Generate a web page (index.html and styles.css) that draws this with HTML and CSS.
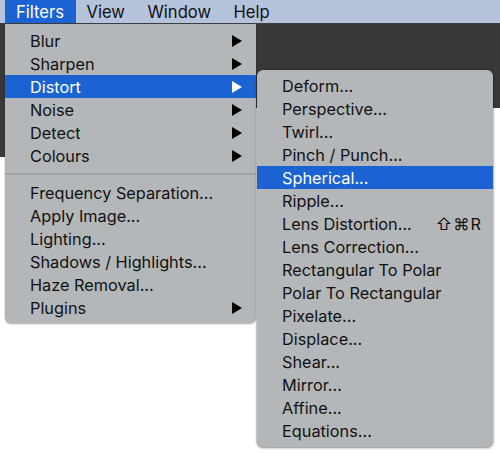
FILE: index.html
```html
<!DOCTYPE html>
<html>
<head>
<meta charset="utf-8">
<link rel="stylesheet" href="styles.css">
</head>
<body>
<div class="screen">
  <div class="menubar">
    <span class="mb-item active">Filters</span>
    <span class="mb-item">View</span>
    <span class="mb-item">Window</span>
    <span class="mb-item">Help</span>
  </div>
  <div class="backdrop"></div>

  <div class="menu main-menu">
    <div class="item"><span class="label">Blur</span><span class="arrow"></span></div>
    <div class="item"><span class="label">Sharpen</span><span class="arrow"></span></div>
    <div class="item selected"><span class="label">Distort</span><span class="arrow"></span></div>
    <div class="item"><span class="label">Noise</span><span class="arrow"></span></div>
    <div class="item"><span class="label">Detect</span><span class="arrow"></span></div>
    <div class="item"><span class="label">Colours</span><span class="arrow"></span></div>
    <div class="sep"></div>
    <div class="item"><span class="label">Frequency Separation...</span></div>
    <div class="item"><span class="label">Apply Image...</span></div>
    <div class="item"><span class="label">Lighting...</span></div>
    <div class="item"><span class="label">Shadows / Highlights...</span></div>
    <div class="item"><span class="label">Haze Removal...</span></div>
    <div class="item"><span class="label">Plugins</span><span class="arrow"></span></div>
  </div>

  <div class="menu sub-menu">
    <div class="item"><span class="label">Deform...</span></div>
    <div class="item"><span class="label">Perspective...</span></div>
    <div class="item"><span class="label">Twirl...</span></div>
    <div class="item"><span class="label">Pinch / Punch...</span></div>
    <div class="item selected"><span class="label">Spherical...</span></div>
    <div class="item"><span class="label">Ripple...</span></div>
    <div class="item"><span class="label">Lens Distortion...</span><span class="shortcut">⇧⌘R</span></div>
    <div class="item"><span class="label">Lens Correction...</span></div>
    <div class="item"><span class="label">Rectangular To Polar</span></div>
    <div class="item"><span class="label">Polar To Rectangular</span></div>
    <div class="item"><span class="label">Pixelate...</span></div>
    <div class="item"><span class="label">Displace...</span></div>
    <div class="item"><span class="label">Shear...</span></div>
    <div class="item"><span class="label">Mirror...</span></div>
    <div class="item"><span class="label">Affine...</span></div>
    <div class="item"><span class="label">Equations...</span></div>
  </div>
</div>
</body>
</html>
```

FILE: styles.css
```css
html, body {
  margin: 0;
  padding: 0;
  background: #ffffff;
}
.screen {
  position: relative;
  width: 500px;
  height: 453px;
  overflow: hidden;
  font-family: "Inter", "Liberation Sans", sans-serif;
  font-size: 16.3px;
  color: #111;
}
.menubar {
  height: 23px;
  background: #b6c3dc;
  border-bottom: 1px solid #3a3e44;
  display: flex;
  align-items: stretch;
  padding-left: 5px;
}
.mb-item {
  display: flex;
  align-items: center;
  padding: 0 11.5px 0 11px;
  font-size: 16.6px;
  color: #111;
}
.mb-item.active {
  background: #1b63d3;
  color: #fff;
}
.backdrop {
  height: 134px;
  background:
    linear-gradient(#383838, #383838) 0 0 / 100% 84px no-repeat,
    linear-gradient(#383838, #383838) 0 0 / 5px 133px no-repeat,
    #ffffff;
}
.menu {
  position: absolute;
  background: #b4b7b9;
  box-sizing: border-box;
}
.main-menu {
  left: 5px;
  top: 24px;
  width: 251px;
  padding: 5px 0 4px;
  border-radius: 0 0 6px 6px;
  box-shadow: 0 1px 2px rgba(0,0,0,0.35);
}
.sub-menu {
  left: 257px;
  top: 70px;
  width: 236px;
  padding: 4px 0 5px;
  border-radius: 6px;
  box-shadow: 0 1px 3px rgba(0,0,0,0.4), 0 0 0 0.5px rgba(0,0,0,0.2);
}
.item {
  height: 23px;
  display: flex;
  align-items: center;
  padding-left: 25px;
  padding-right: 14px;
}
.sub-menu .item {
  padding-left: 25px;
  padding-right: 11px;
}
.item .label {
  flex: 1;
  white-space: nowrap;
}
.item.selected {
  background: #1b63d3;
  color: #fff;
}
.arrow {
  width: 0;
  height: 0;
  border-top: 6px solid transparent;
  border-bottom: 6px solid transparent;
  border-left: 10px solid #000;
}
.item.selected .arrow {
  border-left-color: #fff;
}
.shortcut {
  letter-spacing: 1px;
}
.sep {
  height: 14px;
  display: flex;
  align-items: center;
}
.sep::before {
  content: "";
  display: block;
  width: 100%;
  height: 2px;
  background: #a2a5a7;
}
```
